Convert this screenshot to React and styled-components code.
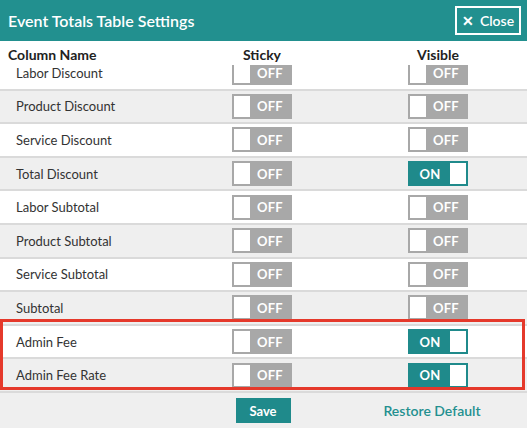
import React, { useLayoutEffect, useRef } from 'react';
import styled, { createGlobalStyle } from 'styled-components';

const GlobalStyle = createGlobalStyle`
  * { box-sizing: border-box; }
  html, body { margin: 0; padding: 0; background: #fff; }
  body { font-family: Lato, "Open Sans", Arial, sans-serif; color: #333; }
`;

const TEAL = '#22908f';

const Modal = styled.div`
  width: 527px;
  height: 428px;
  display: flex;
  flex-direction: column;
  background: #fff;
  overflow: hidden;
`;

const TitleBar = styled.div`
  height: 41px;
  background: ${TEAL};
  display: flex;
  align-items: center;
  justify-content: space-between;
  padding: 0 6px 0 8px;
`;

const Title = styled.h1`
  margin: 0;
  font-size: 16px;
  font-weight: 600;
  color: #fff;
`;

const CloseButton = styled.button`
  width: 66px;
  height: 29px;
  border: 2px solid #fff;
  background: transparent;
  color: #fff;
  font-family: inherit;
  font-size: 14px;
  font-weight: 600;
  display: flex;
  align-items: center;
  justify-content: center;
  gap: 6px;
  padding: 0;
  cursor: pointer;
`;

const Grid = styled.div`
  display: grid;
  grid-template-columns: 175px 174px 178px;
  align-items: center;
`;

const HeadRow = styled(Grid)`
  height: 24px;
  padding-top: 2px;
  font-size: 14px;
  font-weight: 700;
  color: #222;
`;

const HeadCell = styled.div`
  text-align: ${(p) => (p.$left ? 'left' : 'center')};
  padding-left: ${(p) => (p.$left ? '8px' : '0')};
`;

const Body = styled.div`
  height: 326px;
  overflow: hidden;
  position: relative;
`;

const Row = styled(Grid)`
  height: 33.6px;
  border-top: 2px solid #dadada;
  background: ${(p) => (p.$shade ? '#efefef' : '#fff')};
`;

const Label = styled.div`
  padding-left: 16px;
  font-size: 13px;
  color: #333;
`;

const Cell = styled.div`
  display: flex;
  justify-content: center;
`;

const Highlight = styled.div`
  position: relative;
  &::after {
    content: '';
    position: absolute;
    left: 0;
    right: 2px;
    top: -5px;
    bottom: 1px;
    border: 3px solid #e5392b;
    pointer-events: none;
  }
`;

const Toggle = styled.div`
  width: 60px;
  height: 25px;
  padding: 2px;
  background: ${(p) => (p.$on ? '#1f8a8b' : '#a8a8a8')};
  display: flex;
  flex-direction: ${(p) => (p.$on ? 'row-reverse' : 'row')};
  align-items: center;
`;

const Knob = styled.span`
  width: 16px;
  height: 21px;
  background: #fff;
`;

const ToggleText = styled.span`
  flex: 1;
  text-align: center;
  color: #fff;
  font-size: 13px;
  font-weight: 700;
  letter-spacing: 0.2px;
`;

const Footer = styled(Grid)`
  flex: 1;
  background: #efefef;
  border-top: 2px solid #dadada;
`;

const SaveButton = styled.button`
  justify-self: center;
  width: 55px;
  height: 25px;
  border: none;
  background: #1f8a8b;
  color: #fff;
  font-family: inherit;
  font-size: 13px;
  font-weight: 700;
  padding: 0;
  margin-left: 2px;
`;

const RestoreLink = styled.a`
  justify-self: center;
  margin-right: 12px;
  color: #23908f;
  font-size: 14px;
  font-weight: 600;
  text-decoration: none;
`;

const rows = [
  { name: 'Labor Discount', sticky: false, visible: false },
  { name: 'Product Discount', sticky: false, visible: false },
  { name: 'Service Discount', sticky: false, visible: false },
  { name: 'Total Discount', sticky: false, visible: true },
  { name: 'Labor Subtotal', sticky: false, visible: false },
  { name: 'Product Subtotal', sticky: false, visible: false },
  { name: 'Service Subtotal', sticky: false, visible: false },
  { name: 'Subtotal', sticky: false, visible: false },
  { name: 'Admin Fee', sticky: false, visible: true, marked: true },
  { name: 'Admin Fee Rate', sticky: false, visible: true, marked: true },
];

function Switch({ on }) {
  return (
    <Toggle $on={on}>
      <Knob />
      <ToggleText>{on ? 'ON' : 'OFF'}</ToggleText>
    </Toggle>
  );
}

function SettingRow({ row, index }) {
  return (
    <Row $shade={index % 2 === 1}>
      <Label>{row.name}</Label>
      <Cell>
        <Switch on={row.sticky} />
      </Cell>
      <Cell>
        <Switch on={row.visible} />
      </Cell>
    </Row>
  );
}

export default function App() {
  const bodyRef = useRef(null);

  useLayoutEffect(() => {
    if (bodyRef.current) bodyRef.current.scrollTop = 10;
  }, []);

  const plain = rows.filter((r) => !r.marked);
  const marked = rows.filter((r) => r.marked);

  return (
    <>
      <GlobalStyle />
      <Modal>
        <TitleBar>
          <Title>Event Totals Table Settings</Title>
          <CloseButton>
            <span>✕</span>
            <span>Close</span>
          </CloseButton>
        </TitleBar>
        <HeadRow>
          <HeadCell $left>Column Name</HeadCell>
          <HeadCell>Sticky</HeadCell>
          <HeadCell>Visible</HeadCell>
        </HeadRow>
        <Body ref={bodyRef}>
          {plain.map((row, i) => (
            <SettingRow key={row.name} row={row} index={i} />
          ))}
          <Highlight>
            {marked.map((row, i) => (
              <SettingRow key={row.name} row={row} index={plain.length + i} />
            ))}
          </Highlight>
        </Body>
        <Footer>
          <span />
          <SaveButton>Save</SaveButton>
          <RestoreLink href="#">Restore Default</RestoreLink>
        </Footer>
      </Modal>
    </>
  );
}
